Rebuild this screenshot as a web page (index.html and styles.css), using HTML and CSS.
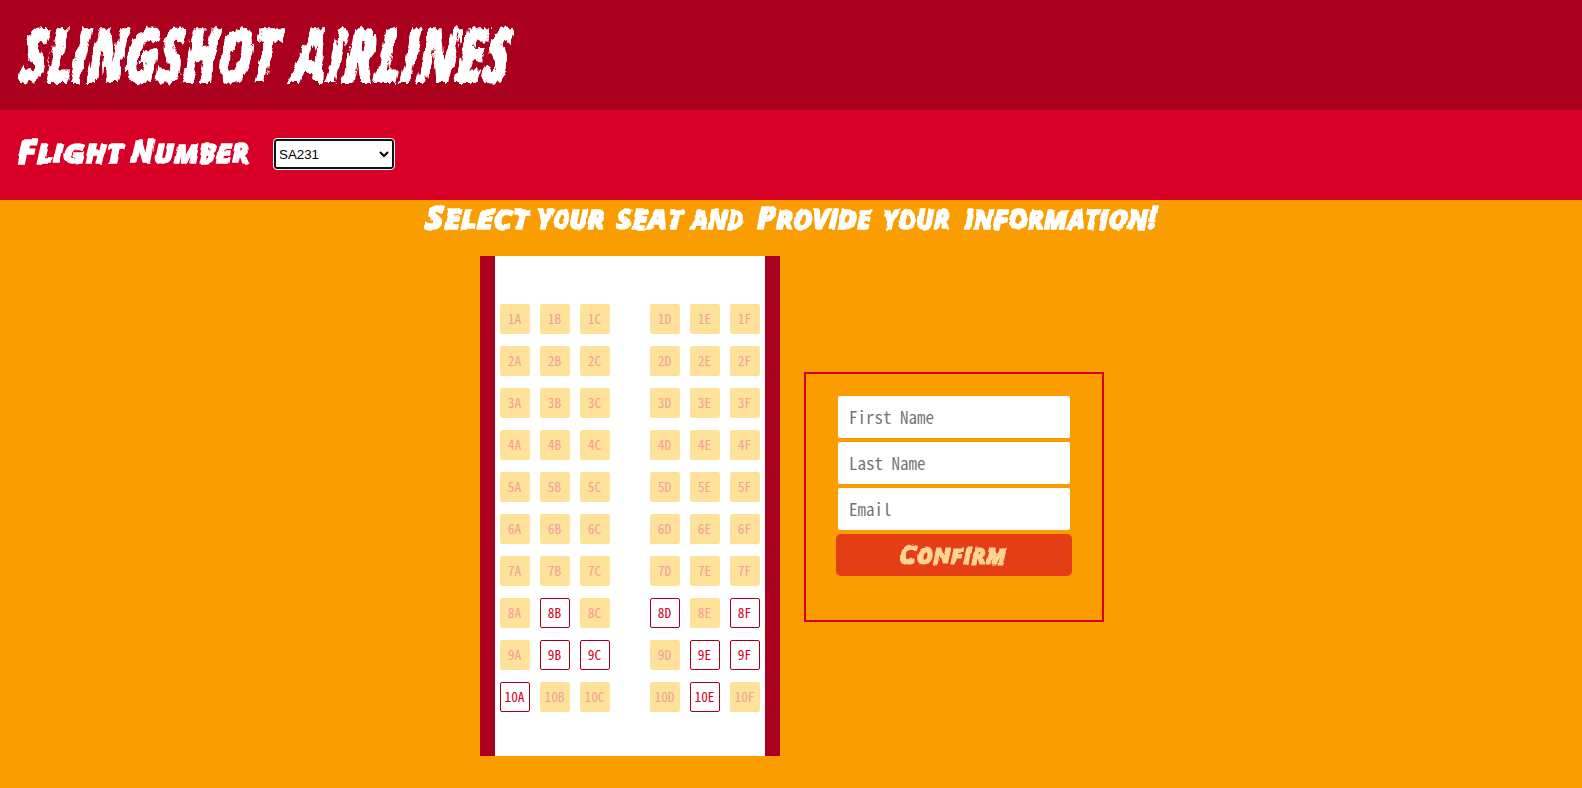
FILE: index.html
```html
<!DOCTYPE html>
<html lang="en">
<head>
<meta charset="utf-8">
<title>Slingshot Airlines</title>
<link rel="stylesheet" href="styles.css">
</head>
<body>
<svg class="defs" width="0" height="0" aria-hidden="true">
  <filter id="rough" x="-5%" y="-10%" width="110%" height="120%" color-interpolation-filters="sRGB">
    <feTurbulence type="fractalNoise" baseFrequency="0.22 0.07" numOctaves="2" seed="4" result="n"/>
    <feDisplacementMap in="SourceGraphic" in2="n" scale="9" xChannelSelector="R" yChannelSelector="G"/>
  </filter>
  <filter id="marker" x="-5%" y="-20%" width="110%" height="140%" color-interpolation-filters="sRGB">
    <feTurbulence type="fractalNoise" baseFrequency="0.07" numOctaves="1" seed="7" result="n"/>
    <feDisplacementMap in="SourceGraphic" in2="n" scale="5" xChannelSelector="R" yChannelSelector="G"/>
  </filter>
</svg>
<header class="banner">
  <h1><svg class="brush" width="530" height="110">
    <text transform="translate(19 82) skewX(-6)" textLength="257" lengthAdjust="spacingAndGlyphs">SLINGSHOT</text>
    <text transform="translate(292 82) skewX(-6)" textLength="217" lengthAdjust="spacingAndGlyphs">AIRLINES</text>
  </svg></h1>
</header>
<section class="flight">
  <label for="flight"><svg class="marker" width="256" height="60">
    <text transform="translate(17 38)" textLength="106" lengthAdjust="spacingAndGlyphs">F<tspan class="low">light</tspan></text>
    <text transform="translate(130 38)" textLength="119" lengthAdjust="spacingAndGlyphs">N<tspan class="low">umber</tspan></text>
  </svg></label>
  <select id="flight"><option>SA231</option></select>
</section>
<main>
  <h2><svg class="marker" width="740" height="56">
    <text transform="translate(4 29)" textLength="104" lengthAdjust="spacingAndGlyphs">S<tspan class="low">elect</tspan></text>
    <text transform="translate(116 29)" textLength="67" lengthAdjust="spacingAndGlyphs"><tspan class="low">your</tspan></text>
    <text transform="translate(195 29)" textLength="67" lengthAdjust="spacingAndGlyphs"><tspan class="low">seat</tspan></text>
    <text transform="translate(270 29)" textLength="53" lengthAdjust="spacingAndGlyphs"><tspan class="low">and</tspan></text>
    <text transform="translate(336 29)" textLength="114" lengthAdjust="spacingAndGlyphs">P<tspan class="low">rovide</tspan></text>
    <text transform="translate(462 29)" textLength="67" lengthAdjust="spacingAndGlyphs"><tspan class="low">your</tspan></text>
    <text transform="translate(543 29)" textLength="193" lengthAdjust="spacingAndGlyphs"><tspan class="low">information</tspan>!</text>
  </svg></h2>
  <div class="content">
    <div class="plane" id="plane"></div>
    <form class="info">
      <div class="field"><input type="text" placeholder="First Name"></div>
      <div class="field"><input type="text" placeholder="Last Name"></div>
      <div class="field"><input type="text" placeholder="Email"></div>
      <button type="button" disabled><svg class="marker" width="120" height="42">
        <text transform="translate(6 30)" textLength="106" lengthAdjust="spacingAndGlyphs">C<tspan class="low">onfirm</tspan></text>
      </svg></button>
    </form>
  </div>
</main>
<script src="seats.js"></script>
</body>
</html>
```
FILE: styles.css
```css
* { box-sizing: border-box; }
body { margin: 0; height: 788px; overflow: hidden; background: #f99d00; font-family: "Noto Sans CJK JP", "Liberation Mono", monospace; }
h1, h2 { margin: 0; }
svg { display: block; overflow: visible; }
.defs { position: absolute; }
.banner { height: 110px; background: #aa001e; }
.flight { display: flex; align-items: flex-start; height: 90px; padding-top: 15px; background: #d80026; }
.flight label { padding-top: 0; }
.flight select { width: 120px; height: 30px; margin: 14px 0 0 18px; padding: 0; border: 2px solid #101010; border-radius: 3px; outline: 1px solid #fff; background: #fff; color: #000; font: 13.333px "Liberation Sans", Arial, sans-serif; text-indent: -1px; }
.brush text { font: italic 800 74px "Open Sans", sans-serif; fill: #fff; stroke: #fff; stroke-width: 1.8px; }
.brush { filter: url(#rough); }
.marker text { font: italic 800 31px "Open Sans", sans-serif; fill: #fff; stroke: #fff; stroke-width: 1.3px; stroke-linejoin: round; }
.marker { filter: url(#marker); }
.marker .low { font-size: 27px; text-transform: uppercase; }
h2 { display: flex; justify-content: center; height: 56px; }
.content { display: flex; justify-content: center; align-items: center; gap: 24px; padding-left: 2px; }
.plane { display: flex; flex-direction: column; gap: 12px; width: 300px; height: 500px; padding: 48px 5px 0; border: solid #aa001e; border-width: 0 15px; background: #fff; }
.row { display: grid; grid-template-columns: repeat(3, 30px) 20px repeat(3, 30px); column-gap: 10px; height: 30px; }
.seat { display: flex; align-items: center; justify-content: center; border: 1px solid #aa001e; border-radius: 2px; background: #fff; color: #d80026; font-size: 13.333px; line-height: 28px; font-feature-settings: "hwid"; padding-right: 1px; }
.taken { border-color: #ffe299; background: #ffe299; color: #efa099; }
.info { display: flex; flex-direction: column; align-items: center; width: 300px; height: 250px; padding-top: 22px; border: 2px solid #d80026; margin-top: -18px; }
.field { width: 232px; height: 42px; margin-bottom: 4px; border-radius: 2px; background: #fff; }
.field input { width: 100%; height: 42px; padding: 0 11px 2px; border: 0; background: none; font: 17px "Noto Sans CJK JP", "Liberation Mono", monospace; font-feature-settings: "hwid"; }
.field input::placeholder { color: #757575; }
.info button { display: flex; justify-content: center; width: 236px; height: 42px; padding: 0; border: 0; border-radius: 5px; background: #e53e16; }
.info button text { font-size: 27px; fill: #ffd494; stroke: #ffd494; stroke-width: 1px; }
.info button .low { font-size: 23px; }
```
FILE: seats.js
```js
const free = ['8B', '8D', '8F', '9B', '9C', '9E', '9F', '10A', '10E'];
const plane = document.getElementById('plane');
for (let r = 1; r <= 10; r++) {
  const row = document.createElement('div');
  row.className = 'row';
  for (const c of ['A', 'B', 'C', '', 'D', 'E', 'F']) {
    const cell = document.createElement('span');
    if (c) {
      cell.textContent = r + c;
      cell.className = free.includes(r + c) ? 'seat' : 'seat taken';
    }
    row.appendChild(cell);
  }
  plane.appendChild(row);
}
```
